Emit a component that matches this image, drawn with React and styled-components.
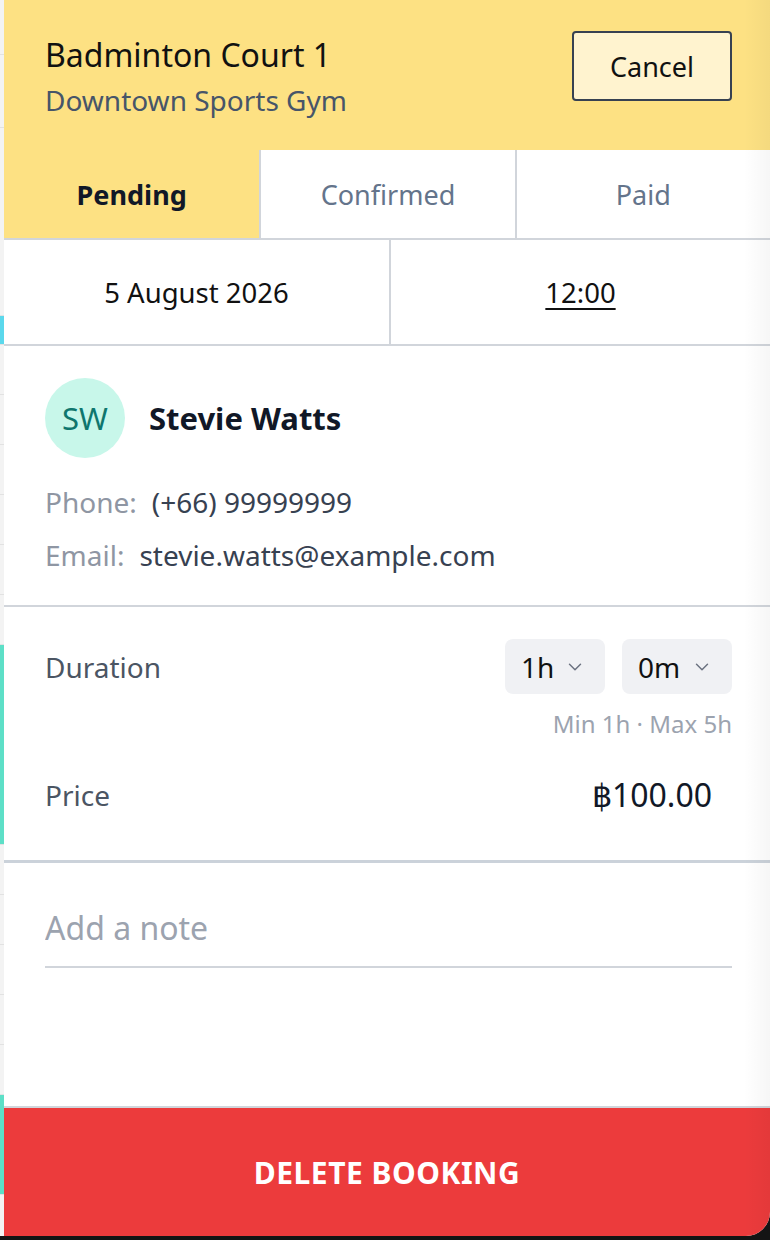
import React, { useState } from 'react';
import styled, { createGlobalStyle } from 'styled-components';
import { ChevronDown } from 'lucide-react';

const GlobalStyle = createGlobalStyle`
html, body {
    margin: 0;
    padding: 0;
    background: #141414;
}
* {
    box-sizing: border-box;
}
body {
    font-family: 'Noto Sans', 'Open Sans', sans-serif;
}
`

const Screen = styled.div`
display: flex;
width: 770px;
height: 1236px;
overflow: hidden;
`

// sliver of the calendar that sits behind the drawer
const Backdrop = styled.div`
width: 4px;
flex-shrink: 0;
background: #f3f3f3;
display: flex;
flex-direction: column;
`

const Slot = styled.div`
height: ${props => props.h}px;
flex-shrink: 0;
border-bottom: 1px solid #e2e2e2;
background: ${props => props.event || 'transparent'};
`

const Panel = styled.div`
position: relative;
flex: 1;
display: flex;
flex-direction: column;
background: #fff;
border-bottom-right-radius: 24px;
overflow: hidden;

&::after {
    content: '';
    position: absolute;
    top: 0;
    right: 0;
    bottom: 0;
    width: 26px;
    background: linear-gradient(to right, rgba(0,0,0,0), rgba(0,0,0,0.035));
    pointer-events: none;
}
`

const Header = styled.div`
height: 150px;
background: #fde183;
display: flex;
justify-content: space-between;
align-items: flex-start;
padding: 31px 38px 0 41px;
`

const TitleBlock = styled.div`
padding-top: 4px;
`

const Title = styled.div`
font-size: 32px;
line-height: 40px;
color: #111;
`

const Subtitle = styled.div`
margin-top: 5px;
font-size: 28px;
line-height: 40px;
color: #475569;
`

const CancelButton = styled.button`
width: 160px;
height: 70px;
background: #fff3cf;
border: 2px solid #374151;
border-radius: 4px;
font-family: inherit;
font-size: 27px;
color: #111;
`

const Tabs = styled.div`
display: grid;
grid-template-columns: 1fr 1fr 1fr;
border-bottom: 2px solid #d1d5db;
`

const Tab = styled.div`
height: 88px;
display: flex;
align-items: center;
justify-content: center;
font-size: 27px;
font-weight: ${props => props.active ? 700 : 400};
color: ${props => props.active ? '#111827' : '#64748b'};
background: ${props => props.active ? '#fde183' : '#fff'};
border-left: ${props => props.first ? 'none' : '2px solid #d1d5db'};
`

const DateRow = styled.div`
display: grid;
grid-template-columns: 385px 1fr;
border-bottom: 2px solid #d1d5db;
`

const DateCell = styled.div`
height: 104px;
display: flex;
align-items: center;
justify-content: center;
font-size: 27.5px;
color: #111;
text-decoration: ${props => props.link ? 'underline' : 'none'};
text-underline-offset: 5px;
text-decoration-thickness: 2px;
border-left: ${props => props.link ? '2px solid #d1d5db' : 'none'};
`

const Section = styled.div`
padding: ${props => props.pad};
border-bottom: ${props => props.thick ? '3px solid #cbd2da' : '2px solid #d1d5db'};
flex: ${props => props.grow ? 1 : 'none'};
`

const Person = styled.div`
display: flex;
align-items: center;
gap: 24px;
`

const Avatar = styled.div`
width: 80px;
height: 80px;
border-radius: 50%;
background: #c8f7ea;
color: #0f766e;
display: flex;
align-items: center;
justify-content: center;
font-size: 31px;
`

const Name = styled.div`
font-size: 31px;
font-weight: 700;
color: #111827;
`

const InfoLine = styled.div`
margin-top: ${props => props.top}px;
font-size: 28px;
line-height: 36px;
color: #374151;
display: flex;
gap: 15px;
`

const InfoLabel = styled.span`
color: #8f96a3;
`

const FieldRow = styled.div`
display: flex;
align-items: center;
justify-content: space-between;
margin-top: ${props => props.top || 0}px;
`

const FieldLabel = styled.div`
font-size: 28px;
color: #4b5563;
`

const Selects = styled.div`
display: flex;
gap: 17px;
`

const Select = styled.div`
height: 55px;
width: ${props => props.w}px;
background: #f0f1f4;
border-radius: 8px;
display: flex;
align-items: center;
justify-content: space-between;
padding: 0 19px 0 16px;
font-size: 28px;
color: #111;
`

const Hint = styled.div`
margin-top: 16px;
text-align: right;
font-size: 24px;
line-height: 28px;
color: #9ca3af;
`

const Price = styled.div`
margin-right: 20px;
font-size: 32px;
line-height: 40px;
color: #111827;
`

const NoteInput = styled.input`
display: block;
width: 100%;
height: 63px;
padding: 0 0 17px;
border: none;
border-bottom: 2px solid #d1d5db;
outline: none;
font-family: inherit;
font-size: 32px;
color: #111;
background: transparent;

&::placeholder {
    color: #9ca3af;
}
`

const DeleteButton = styled.button`
height: 128px;
flex-shrink: 0;
border: none;
background: #ec3b3c;
color: #fff;
font-family: inherit;
font-size: 30px;
font-weight: 700;
letter-spacing: 0.5px;
`

const backdropSlots = [
    { h: 55 }, { h: 73 }, { h: 188 }, { h: 29, event: '#5bd8ec' }, { h: 50 }, { h: 50 }, { h: 50 },
    { h: 50 }, { h: 50 }, { h: 50 }, { h: 200, event: '#5ddfc7' }, { h: 50 }, { h: 50 },
    { h: 50 }, { h: 50 }, { h: 50 }, { h: 100, event: '#5ddfc7' },
];

const App = () => {
    const [tab, setTab] = useState('Pending');
    const tabs = ['Pending', 'Confirmed', 'Paid'];

    return (
        <Screen>
            <GlobalStyle />
            <Backdrop>
                {backdropSlots.map((s, i) => <Slot key={i} h={s.h} event={s.event} />)}
            </Backdrop>
            <Panel>
                <Header>
                    <TitleBlock>
                        <Title>Badminton Court 1</Title>
                        <Subtitle>Downtown Sports Gym</Subtitle>
                    </TitleBlock>
                    <CancelButton>Cancel</CancelButton>
                </Header>

                <Tabs>
                    {tabs.map((t, i) => (
                        <Tab key={t} first={i === 0} active={tab === t} onClick={() => setTab(t)}>{t}</Tab>
                    ))}
                </Tabs>

                <DateRow>
                    <DateCell>5 August 2026</DateCell>
                    <DateCell link>12:00</DateCell>
                </DateRow>

                <Section pad="32px 38px 32px 41px">
                    <Person>
                        <Avatar>SW</Avatar>
                        <Name>Stevie Watts</Name>
                    </Person>
                    <InfoLine top={26}><InfoLabel>Phone:</InfoLabel>(+66) 99999999</InfoLine>
                    <InfoLine top={17}><InfoLabel>Email:</InfoLabel>stevie.watts@example.com</InfoLine>
                </Section>

                <Section thick pad="32px 38px 45px 41px">
                    <FieldRow>
                        <FieldLabel>Duration</FieldLabel>
                        <Selects>
                            <Select w={100}>1h <ChevronDown size={22} strokeWidth={1.6} color="#6b7280" /></Select>
                            <Select w={110}>0m <ChevronDown size={22} strokeWidth={1.6} color="#6b7280" /></Select>
                        </Selects>
                    </FieldRow>
                    <Hint>Min 1h · Max 5h</Hint>
                    <FieldRow top={37}>
                        <FieldLabel>Price</FieldLabel>
                        <Price>฿100.00</Price>
                    </FieldRow>
                </Section>

                <Section grow pad="42px 38px 0 41px">
                    <NoteInput placeholder="Add a note" />
                </Section>

                <DeleteButton>DELETE BOOKING</DeleteButton>
            </Panel>
        </Screen>
    )
}

export default App
